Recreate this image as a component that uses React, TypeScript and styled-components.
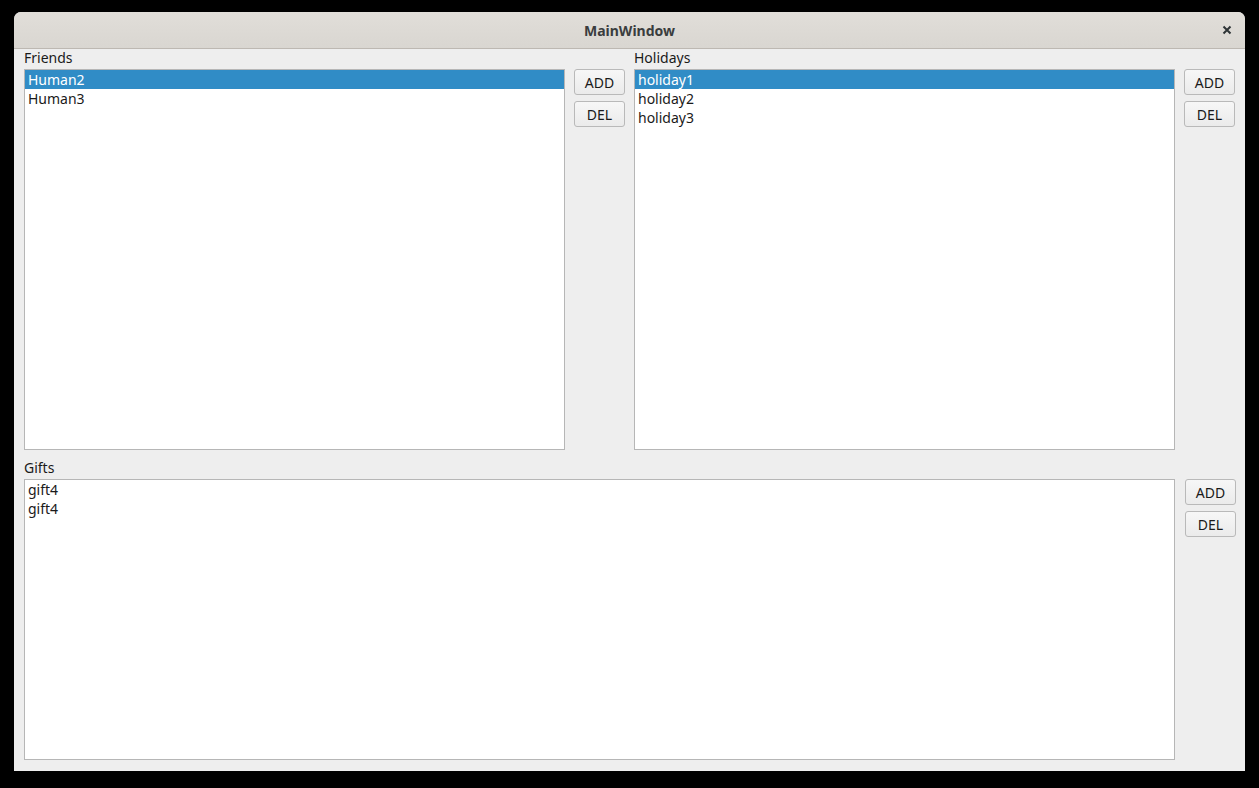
import { createGlobalStyle } from 'styled-components';
import styled from 'styled-components';

const GlobalStyle = createGlobalStyle`
  html, body {
    margin: 0;
    padding: 0;
    background: #000;
  }
  body {
    font-family: "Noto Sans", "DejaVu Sans", sans-serif;
    font-size: 14px;
    color: #1a1a1a;
  }
`;

const Screen = styled.div`
  width: 1259px;
  height: 788px;
  background: #000;
  padding: 12px 14px 0 14px;
  box-sizing: border-box;
`;

const Window = styled.div`
  width: 1231px;
  height: 759px;
  display: flex;
  flex-direction: column;
  background: #eeeeee;
  border-radius: 7px 7px 0 0;
  overflow: hidden;
`;

const TitleBar = styled.div`
  height: 37px;
  flex: 0 0 37px;
  display: grid;
  grid-template-columns: 40px 1fr 40px;
  align-items: center;
  background: linear-gradient(#e1ded9, #d9d6d1);
  border-bottom: 1px solid #bdb8b2;
  box-sizing: border-box;
`;

const Title = styled.div`
  grid-column: 2;
  text-align: center;
  font-weight: bold;
  font-size: 14px;
  color: #3a3d3e;
`;

const Close = styled.div`
  display: flex;
  justify-content: flex-start;
  padding-left: 17px;
  color: #2e3436;
`;

const Content = styled.div`
  flex: 1;
  display: grid;
  grid-template-rows: 401px 1fr;
  row-gap: 9px;
  padding: 0 9px 11px 10px;
`;

const TopRow = styled.div`
  display: grid;
  grid-template-columns: 541px 51px 541px 51px;
  column-gap: 9px;
`;

const BottomRow = styled.div`
  display: grid;
  grid-template-columns: 1151px 51px;
  column-gap: 10px;
`;

const Group = styled.div`
  display: flex;
  flex-direction: column;
`;

const Label = styled.div`
  height: 20px;
  line-height: 18px;
`;

const List = styled.div`
  flex: 1;
  background: #fff;
  border: 1px solid #b6b6b6;
  display: flex;
  flex-direction: column;
`;

const Item = styled.div<{ $selected?: boolean }>`
  height: 19px;
  line-height: 19px;
  padding-left: 3px;
  background: ${(p) => (p.$selected ? '#308cc6' : 'transparent')};
  color: ${(p) => (p.$selected ? '#fff' : '#1a1a1a')};
`;

const Buttons = styled.div`
  padding-top: 20px;
  display: flex;
  flex-direction: column;
  gap: 6px;
`;

const Button = styled.button`
  height: 26px;
  width: 51px;
  font-family: inherit;
  font-size: 14px;
  color: #1a1a1a;
  background: linear-gradient(#f7f7f7, #ebebeb);
  border: 1px solid #b9b9b9;
  border-radius: 3px;
  padding: 0;
`;

const Panel = ({ label, items, selected }: { label: string; items: string[]; selected?: number }) => (
  <Group>
    <Label>{label}</Label>
    <List>
      {items.map((it, i) => (
        <Item key={i} $selected={i === selected}>
          {it}
        </Item>
      ))}
    </List>
  </Group>
);

const Actions = () => (
  <Buttons>
    <Button>ADD</Button>
    <Button>DEL</Button>
  </Buttons>
);

export default function App() {
  return (
    <>
      <GlobalStyle />
      <Screen>
        <Window>
          <TitleBar>
            <Title>MainWindow</Title>
            <Close>
              <svg width="10" height="10" viewBox="0 0 10 10">
                <path d="M1.5 1.5 L8.5 8.5 M8.5 1.5 L1.5 8.5" stroke="#2e3436" strokeWidth="2" />
              </svg>
            </Close>
          </TitleBar>
          <Content>
            <TopRow>
              <Panel label="Friends" items={['Human2', 'Human3']} selected={0} />
              <Actions />
              <Panel label="Holidays" items={['holiday1', 'holiday2', 'holiday3']} selected={0} />
              <Actions />
            </TopRow>
            <BottomRow>
              <Panel label="Gifts" items={['gift4', 'gift4']} />
              <Actions />
            </BottomRow>
          </Content>
        </Window>
      </Screen>
    </>
  );
}
